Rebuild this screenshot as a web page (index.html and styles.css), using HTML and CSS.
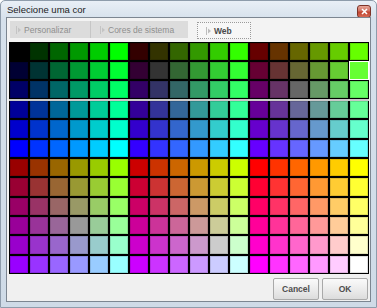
FILE: index.html
```html
<!DOCTYPE html>
<html lang="pt">
<head>
    <meta charset="UTF-8">
    <meta name="viewport" content="width=device-width, initial-scale=1.0">
    <title>Selecione uma cor</title>
    <link rel="stylesheet" href="styles.css">
</head>
<body>
    <div class="window">
        <div class="titlebar">
            <span class="title">Selecione uma cor</span>
            <button class="close" title="Fechar">
                <svg width="7" height="7" viewBox="0 0 7 7"><path d="M1 1l5 5M6 1l-5 5" stroke="#fff" stroke-width="1.6"/></svg>
            </button>
        </div>
        <div class="client">
            <div class="tabs">
                <div class="tab tab-custom">
                    <svg class="arrow" width="5" height="8" viewBox="0 0 5 8"><path d="M0.5 0v8" stroke="#c4c4c4"/><path d="M2 1.5l3 2.5-3 2.5z" fill="#c4c4c4"/></svg>
                    Personalizar
                </div>
                <div class="tab tab-system">
                    <svg class="arrow" width="5" height="8" viewBox="0 0 5 8"><path d="M0.5 0v8" stroke="#c4c4c4"/><path d="M2 1.5l3 2.5-3 2.5z" fill="#c4c4c4"/></svg>
                    Cores de sistema
                </div>
                <div class="tab tab-web active">
                    <svg class="arrow" width="5" height="8" viewBox="0 0 5 8"><path d="M0.5 0v8" stroke="#bdbdbd"/><path d="M2 1.5l3 2.5-3 2.5z" fill="#bdbdbd"/></svg>
                    Web
                </div>
            </div>
            <div class="palette">
                <div class="swatches" id="top"></div>
                <div class="swatches bottom" id="bottom"></div>
            </div>
            <div class="actions">
                <button class="btn">Cancel</button>
                <button class="btn">OK</button>
            </div>
        </div>
    </div>

    <script>
        const hex = ['00', '33', '66', '99', 'CC', 'FF'];

        function fill(id, rows) {
            const box = document.getElementById(id);
            rows.forEach(r => {
                for (let c = 0; c < 18; c++) {
                    const red = hex[Math.floor(r / 6) * 3 + Math.floor(c / 6)];
                    const color = '#' + red + hex[c % 6] + hex[r % 6];
                    const cell = document.createElement('div');
                    cell.className = 'swatch';
                    if (color === '#66FF33') cell.classList.add('selected');
                    cell.style.background = color;
                    cell.title = color;
                    box.appendChild(cell);
                }
            });
        }

        fill('top', [0, 1, 2]);
        fill('bottom', [3, 4, 5, 6, 7, 8, 9, 10, 11]);
    </script>
</body>
</html>
```

FILE: styles.css
```css
body {
    margin: 0;
    font-family: "Liberation Sans", Arial, sans-serif;
    background: #fff;
}
.window {
    width: 377px;
    height: 308px;
    box-sizing: border-box;
    border: 1px solid #8e9cab;
    border-radius: 5px 5px 0 0;
    padding: 0 5px 5px;
    background: linear-gradient(to bottom, #e9eff6 0, #d6e1ec 18px, #cfdbe7 100%);
    display: flex;
    flex-direction: column;
}
.titlebar {
    height: 16px;
    display: flex;
    align-items: center;
    justify-content: space-between;
    padding-left: 1px;
}
.title {
    font-size: 9.5px;
    color: #1b1b1b;
    margin-top: 1px;
}
.close {
    width: 14px;
    height: 13px;
    margin-top: 4px;
    padding: 0;
    border: 1px solid #7d3328;
    border-radius: 3px;
    background: linear-gradient(to bottom, #e8a799 0, #d0705f 45%, #c0432f 55%, #d56a55 100%);
    display: flex;
    align-items: center;
    justify-content: center;
}
.client {
    flex: 1;
    border: 1px solid #7c8691;
    background: #f3f3f3;
    display: flex;
    flex-direction: column;
}
.tabs {
    display: flex;
    align-items: flex-start;
    padding: 3px 0 0 3px;
    height: 18px;
}
.tab {
    height: 17px;
    box-sizing: border-box;
    display: flex;
    align-items: center;
    gap: 2px;
    font-size: 8.5px;
    color: #8f8f8f;
    background: #dcdcdc;
}
.tab .arrow {
    margin-right: 1px;
}
.tab-custom {
    width: 81px;
    padding-left: 6px;
    border-right: 1px solid #c6c6c6;
}
.tab-system {
    width: 97px;
    padding-left: 9px;
}
.tab.active {
    width: 54px;
    height: 17px;
    margin: 1px 0 0 9px;
    padding-left: 8px;
    border: 1px dotted #9a9a9a;
    background: #f7f7f7;
    color: #4a4a4a;
    font-weight: bold;
}
.palette {
    width: 360px;
    margin: 3px 0 0 2px;
}
.swatches {
    display: grid;
    grid-template-columns: repeat(18, 18px);
    grid-auto-rows: 17px;
    gap: 2px;
    padding: 1px;
    background: #000;
}
.swatches.bottom {
    grid-auto-rows: 17.33px;
    padding-top: 0;
    border-top: 2px solid #c9c9c9;
}
.swatch {
    box-shadow: inset 0 0 0 1px rgba(0, 0, 0, 0.12);
}
.swatch.selected {
    box-shadow: 0 0 0 1px #fff;
}
.actions {
    flex: 1;
    display: flex;
    justify-content: flex-end;
    align-items: flex-start;
    gap: 3px;
    padding: 4px 2px 0 0;
    background: #f0f0f0;
}
.btn {
    width: 46px;
    height: 22px;
    padding: 0;
    border: 1px solid #a9a9a9;
    border-radius: 2px;
    background: linear-gradient(to bottom, #fafafa 0, #ececec 50%, #dcdcdc 100%);
    font-family: "Liberation Sans", Arial, sans-serif;
    font-size: 8.5px;
    font-weight: bold;
    color: #4d4d4d;
}
```
